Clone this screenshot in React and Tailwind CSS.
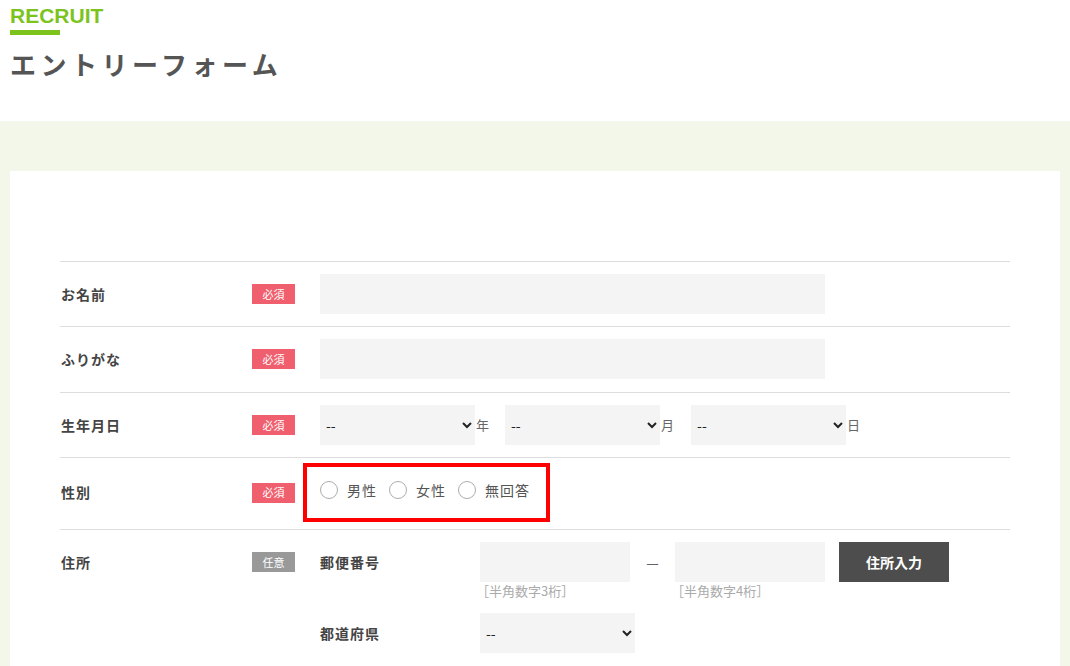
import { useState } from 'react';

function Badge({ required = true }) {
  return (
    <span
      className={`flex h-[20px] w-[43px] shrink-0 items-center justify-center text-[11px] leading-none text-white ${
        required ? 'bg-[#f05f6d]' : 'bg-[#999999]'
      }`}
    >
      {required ? '必須' : '任意'}
    </span>
  );
}

function Label({ children }) {
  return <div className="w-[192px] shrink-0 pl-[1px] text-[14px] font-bold tracking-[1px] text-[#444]">{children}</div>;
}

function Select({ className = 'w-[155px]' }) {
  return (
    <select className={`h-[40px] ${className} bg-[#f4f4f4] pl-[2px] pr-[4px] text-[14px] text-[#222] outline-none`}>
      <option>--</option>
    </select>
  );
}

function Radio({ label, checked, onClick }) {
  return (
    <button type="button" onClick={onClick} className="mr-[12px] flex items-center">
      <span className="flex h-[18px] w-[18px] items-center justify-center rounded-full border border-[#adadad] bg-white">
        {checked && <span className="h-[8px] w-[8px] rounded-full bg-[#7dc31e]" />}
      </span>
      <span className="ml-[9px] text-[14px] tracking-[1px] text-[#555]">{label}</span>
    </button>
  );
}

export default function App() {
  const [gender, setGender] = useState('');

  return (
    <div className="min-h-screen bg-white font-['Noto_Sans_CJK_JP',sans-serif] text-[#444]">
      {/* HEADER */}
      <div className="h-[121px] px-[10px] pt-[4px]">
        <div className="font-['Liberation_Sans',Arial,sans-serif] text-[21px] font-bold leading-[24px] text-[#7dc31e]">
          RECRUIT
        </div>
        <div className="mt-[2px] h-[5px] w-[50px] bg-[#7dc31e]" />
        <h1 className="mt-[13px] text-[26px] font-bold leading-[32px] tracking-[4.5px] text-[#555]">エントリーフォーム</h1>
      </div>

      {/* FORM AREA */}
      <div className="bg-[#f3f7ea] px-[10px] pt-[50px]">
        <div className="bg-white px-[50px] pb-[40px] pt-[90px]">
          {/* NAME */}
          <div className="flex items-center border-t border-[#dddddd] py-[12px]">
            <Label>お名前</Label>
            <Badge />
            <input className="ml-[25px] h-[40px] w-[505px] bg-[#f4f4f4] px-[10px] text-[14px] outline-none" />
          </div>

          {/* KANA */}
          <div className="flex items-center border-t border-[#dddddd] pb-[13px] pt-[12px]">
            <Label>ふりがな</Label>
            <Badge />
            <input className="ml-[25px] h-[40px] w-[505px] bg-[#f4f4f4] px-[10px] text-[14px] outline-none" />
          </div>

          {/* BIRTHDAY */}
          <div className="flex items-center border-t border-[#dddddd] py-[12px]">
            <Label>生年月日</Label>
            <Badge />
            <div className="ml-[25px] flex items-center text-[13px] text-[#666]">
              <Select />
              <span className="ml-[1px] mr-[16px]">年</span>
              <Select />
              <span className="ml-[1px] mr-[17px]">月</span>
              <Select />
              <span className="ml-[1px]">日</span>
            </div>
          </div>

          {/* GENDER */}
          <div className="flex items-center border-t border-[#dddddd] pb-[7px] pt-[5px]">
            <Label>性別</Label>
            <Badge />
            <div className="ml-[8px] flex h-[59px] items-center border-4 border-[#ff0000] pb-[5px] pl-[13px] pr-[4px]">
              <Radio label="男性" checked={gender === 'm'} onClick={() => setGender('m')} />
              <Radio label="女性" checked={gender === 'f'} onClick={() => setGender('f')} />
              <Radio label="無回答" checked={gender === 'n'} onClick={() => setGender('n')} />
            </div>
          </div>

          {/* ADDRESS */}
          <div className="flex items-start border-t border-[#dddddd] pb-[12px] pt-[12px]">
            <div className="w-[192px] shrink-0 pl-[1px] text-[14px] font-bold leading-[40px] tracking-[1px] text-[#444]">住所</div>
            <div className="mt-[10px]">
              <Badge required={false} />
            </div>
            <div className="ml-[25px] flex flex-col">
              <div className="flex items-start">
                <div className="w-[160px] text-[14px] font-bold leading-[40px] tracking-[1px] text-[#444]">郵便番号</div>
                <div className="flex flex-col">
                  <input className="h-[40px] w-[150px] bg-[#f4f4f4] px-[10px] text-[14px] outline-none" />
                  <span className="-ml-[4px] text-[13px] leading-[18px] text-[#aaa]">［半角数字3桁］</span>
                </div>
                <span className="w-[45px] text-center text-[14px] leading-[40px] text-[#666]">—</span>
                <div className="flex flex-col">
                  <input className="h-[40px] w-[150px] bg-[#f4f4f4] px-[10px] text-[14px] outline-none" />
                  <span className="-ml-[4px] text-[13px] leading-[18px] text-[#aaa]">［半角数字4桁］</span>
                </div>
                <button className="ml-[14px] h-[40px] w-[110px] bg-[#4d4d4d] text-[14px] font-bold text-white">住所入力</button>
              </div>
              <div className="mt-[13px] flex items-center">
                <div className="w-[160px] text-[14px] font-bold tracking-[1px] text-[#444]">都道府県</div>
                <Select />
              </div>
            </div>
          </div>
        </div>
      </div>
    </div>
  );
}
